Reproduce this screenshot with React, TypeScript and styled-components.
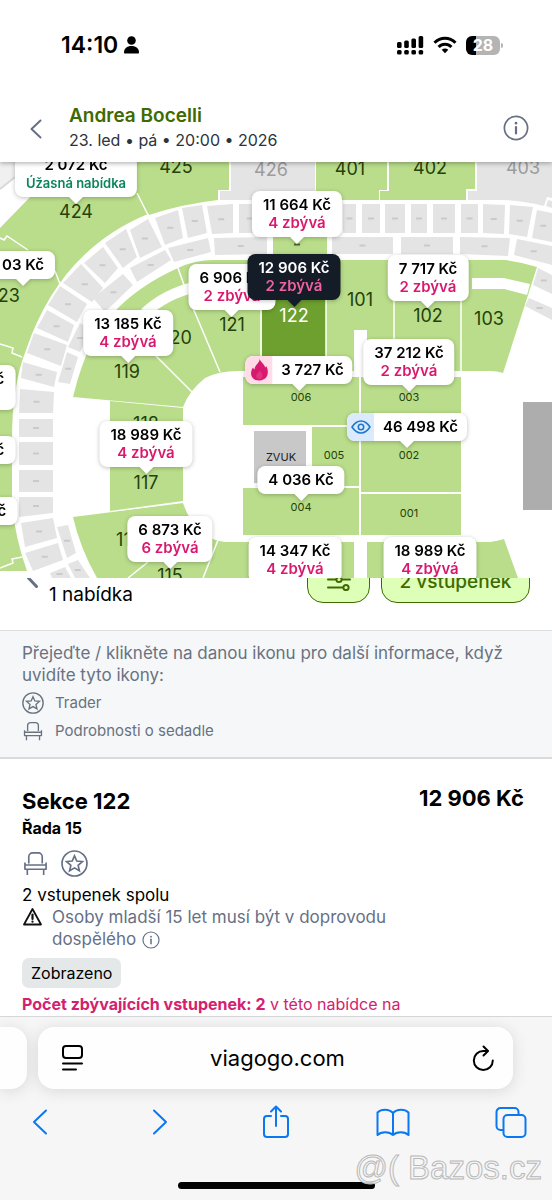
import React from "react";
import styled, { createGlobalStyle, css } from "styled-components";

const GlobalStyle = createGlobalStyle`
  *, *::before, *::after { box-sizing: border-box; }
  body { margin: 0; background: #fff; color: #000; font-family: Inter, "Liberation Sans", sans-serif; }
  button { font: inherit; color: inherit; background: none; border: 0; padding: 0; cursor: pointer; }
  h1, h2, p, ul { margin: 0; padding: 0; }
  svg { display: block; }
`;

const Page = styled.div`
  position: relative;
  display: flex;
  flex-direction: column;
  min-height: 100vh;
  overflow: hidden;
`;

/* ---------- status bar ---------- */
const StatusBar = styled.div`
  display: flex;
  align-items: center;
  justify-content: space-between;
  height: 90px;
  padding: 0 52px 0 61px;
`;
const StatusGroup = styled.div<{ $gap: number }>`
  display: flex;
  align-items: center;
  gap: ${(p) => p.$gap}px;
`;
const Clock = styled.span`
  font-size: 23px;
  line-height: 28px;
  font-weight: 600;
`;
const Battery = styled.span`
  position: relative;
  display: flex;
  align-items: center;
  justify-content: center;
  width: 34px;
  height: 19px;
  border-radius: 6px;
  background: linear-gradient(90deg, #000 28%, #b4b4b4 28%);
  color: #fff;
  font-size: 16px;
  font-weight: 700;
  &::after {
    content: "";
    position: absolute;
    right: -3px;
    top: 7px;
    width: 2px;
    height: 5px;
    border-radius: 0 2px 2px 0;
    background: #b4b4b4;
  }
`;

/* ---------- event header ---------- */
const Header = styled.header`
  position: relative;
  z-index: 3;
  display: flex;
  align-items: center;
  gap: 27px;
  height: 72px;
  padding: 4px 23px 0 30px;
  background: #fff;
  box-shadow: 0 1px 5px rgba(0, 0, 0, 0.35);
  clip-path: inset(0 0 -8px 0);
  color: #667085;
`;
const HeaderBack = styled.button`
  padding-top: 2px;
`;
const EventText = styled.div`
  flex: 1;
`;
const EventTitle = styled.h1`
  font-size: 19px;
  line-height: 24px;
  font-weight: 600;
  color: #3f6a00;
`;
const EventDate = styled.p`
  font-size: 16px;
  line-height: 24px;
  color: #2c333d;
`;

/* ---------- seat map ---------- */
const MapArea = styled.section`
  position: relative;
  z-index: 2;
  height: 416px;
  overflow: hidden;
  background: #fff;
`;
const SeatMap = styled.svg`
  width: 100%;
  height: 416px;
  font-family: Inter, sans-serif;
`;
const Pin = styled.button<{ $x: number; $y: number; $dark?: boolean; $flat?: boolean }>`
  position: absolute;
  left: calc(50% + ${(p) => p.$x - 276}px);
  top: ${(p) => p.$y - 162}px;
  transform: translateX(-50%);
  display: flex;
  border-radius: 8px;
  background: ${(p) => (p.$dark ? "#131c27" : "#fff")};
  color: ${(p) => (p.$dark ? "#fff" : "#000")};
  filter: drop-shadow(0 1px 2px rgba(0, 0, 0, 0.25));
  font-size: 15px;
  line-height: 18px;
  font-weight: 600;
  white-space: nowrap;
  ${(p) =>
    !p.$flat &&
    css`
      &::after {
        content: "";
        position: absolute;
        left: 50%;
        top: 100%;
        margin: -1px 0 0 -8px;
        border: 8px solid transparent;
        border-bottom: 0;
        border-top-color: ${p.$dark ? "#131c27" : "#fff"};
      }
    `}
`;
const PinBody = styled.span<{ $tight?: boolean; $tall?: boolean }>`
  display: block;
  min-height: ${(p) => (p.$tall ? 45 : 28)}px;
  padding: 5px ${(p) => (p.$tight ? 9 : 11)}px;
`;
const PinNote = styled.span<{ $tone: string; $small?: boolean }>`
  display: block;
  font-size: ${(p) => (p.$small ? 13 : 15)}px;
  color: ${(p) => p.$tone};
`;
const PinIcon = styled.span<{ $bg: string }>`
  display: flex;
  align-items: center;
  justify-content: center;
  width: 27px;
  border-radius: 8px 0 0 8px;
  background: ${(p) => p.$bg};
`;

/* ---------- offers bar ---------- */
const OffersBar = styled.div`
  position: relative;
  z-index: 1;
  display: flex;
  align-items: flex-start;
  gap: 11px;
  height: 52px;
  padding: 0 22px 0 27px;
`;
const OffersBack = styled.button`
  margin-top: -10px;
  color: #667085;
`;
const OffersCount = styled.p`
  flex: 1;
  padding-top: 5px;
  font-size: 19px;
  line-height: 24px;
`;
const Chip = styled.button<{ $width: number }>`
  display: flex;
  align-items: center;
  justify-content: center;
  width: ${(p) => p.$width}px;
  height: 42px;
  margin-top: -17px;
  border: 1px solid #3f6a00;
  border-radius: 16px;
  background: #deffb8;
  color: #3f6a00;
  font-size: 19px;
  line-height: 24px;
  font-weight: 500;
`;

/* ---------- legend ---------- */
const Legend = styled.section`
  padding: 11px 40px 12px 22px;
  border-top: 1px solid #dcdfe2;
  border-bottom: 2px solid #d8dadc;
  background: #f5f7f9;
  color: #697280;
  font-size: 17px;
  line-height: 22px;
`;
const LegendList = styled.ul`
  list-style: none;
  padding-top: 3px;
  font-size: 15px;
  line-height: 28px;
`;
const LegendItem = styled.li`
  display: flex;
  align-items: center;
  gap: 11px;
`;

/* ---------- listing ---------- */
const Listing = styled.article`
  display: flex;
  align-items: flex-start;
  justify-content: space-between;
  flex: 1;
  padding: 28px 28px 0 22px;
  font-size: 16px;
  line-height: 22px;
`;
const ListingMain = styled.div`
  flex: 1;
  max-width: 420px;
`;
const SectionName = styled.h2`
  font-size: 22px;
  line-height: 28px;
  font-weight: 700;
`;
const RowName = styled.p`
  font-size: 16px;
  line-height: 26px;
  font-weight: 700;
`;
const Price = styled.p`
  font-size: 22px;
  line-height: 22px;
  font-weight: 700;
`;
const Perks = styled.div`
  display: flex;
  align-items: center;
  gap: 12px;
  padding: 9px 0 7px;
  color: #667085;
`;
const Together = styled.p`
  font-size: 17px;
`;
const Warning = styled.div`
  display: flex;
  gap: 9px;
  font-size: 17px;
  color: #667085;
`;
const WarningIcon = styled.span`
  color: #111;
`;
const WarningText = styled.p`
  flex: 1;
  max-width: 345px;
`;
const InlineInfo = styled.button`
  display: inline-block;
  height: 18px;
  margin-left: 1px;
  vertical-align: -4px;
`;
const Seen = styled.span`
  display: inline-block;
  margin: 8px 0 5px;
  padding: 3px 9px;
  border-radius: 7px;
  background: #e4e8e9;
  line-height: 24px;
`;
const Remaining = styled.p`
  color: #d4216f;
  white-space: nowrap;
  b { font-weight: 700; }
`;

/* ---------- browser bar ---------- */
const BrowserBar = styled.footer`
  height: 184px;
  border-top: 1px solid #d5d7d8;
  background: #f6f6f6;
`;
const AddressRow = styled.div`
  display: flex;
  gap: 11px;
  padding: 10px 39px 0 0;
`;
const NextTab = styled.div`
  width: 27px;
  height: 62px;
  border-radius: 0 16px 16px 0;
  background: #fefefe;
  box-shadow: 0 2px 16px rgba(0, 0, 0, 0.12);
`;
const Address = styled.div`
  flex: 1;
  display: flex;
  align-items: center;
  justify-content: space-between;
  height: 62px;
  padding: 0 18px 0 24px;
  border-radius: 16px;
  background: #fefefe;
  box-shadow: 0 2px 16px rgba(0, 0, 0, 0.12);
  font-size: 22px;
`;
const Toolbar = styled.nav`
  display: flex;
  justify-content: space-between;
  align-items: center;
  padding: 13px 24px 0 23px;
  color: #0a78f0;
`;
const HomeBar = styled.div`
  width: 197px;
  height: 7px;
  margin: 40px auto 0;
  border-radius: 4px;
  background: #000;
`;
const Watermark = styled.span`
  position: absolute;
  right: 10px;
  bottom: 14px;
  font-family: "Liberation Sans", Arial, sans-serif;
  font-size: 33px;
  line-height: 36px;
  color: rgba(246, 246, 246, 0.85);
  -webkit-text-stroke: 1px #b9b9b9;
  white-space: pre;
`;

/* ---------- icons ---------- */
const stroke = { fill: "none", stroke: "currentColor", strokeLinecap: "round", strokeLinejoin: "round" } as const;

const InfoIcon = ({ size }: { size: number }) => (
  <svg width={size} height={size} viewBox="0 0 26 26" {...stroke} strokeWidth="1.7">
    <circle cx="13" cy="13" r="11.6" />
    <path d="M13 12v6.5" strokeWidth="2.2" />
    <path d="M13 8v.2" strokeWidth="2.6" />
  </svg>
);
const StarIcon = ({ size }: { size: number }) => (
  <svg width={size} height={size} viewBox="0 0 26 26" {...stroke} strokeWidth="1.6" strokeLinejoin="miter">
    <circle cx="13" cy="13" r="12" />
    <path d="M13 5.6l2.2 5 5.4.5-4.1 3.6 1.2 5.3-4.7-2.8-4.7 2.8 1.2-5.3-4.1-3.6 5.4-.5z" />
  </svg>
);
const SeatIcon = ({ width, height }: { width: number; height: number }) => (
  <svg width={width} height={height} viewBox="0 0 26 26" {...stroke} strokeWidth="1.7" strokeLinecap="butt">
    <path d="M6 13V6a4 4 0 0 1 4-4h6a4 4 0 0 1 4 4v7" />
    <path d="M2 12v7h22v-7M2 14.6h22M4.5 19v6M21.5 19v6" />
  </svg>
);
const Chevron = ({ w, h, width = 2 }: { w: number; h: number; width?: number }) => (
  <svg width={w} height={h} viewBox={`0 0 ${w} ${h}`} {...stroke} strokeWidth={width}>
    <path d={`M${w - 1.5} 1.5L1.5 ${h / 2}L${w - 1.5} ${h - 1.5}`} />
  </svg>
);

/* ---------- map data ---------- */
const green = "#b9dd8a";
const grey = "#e4e4e4";

const upperStands = [
  "M137 162H229V190H218V200Q182 204 149 215L137 193Z",
  "M316 162H387V190H379V200H316Z",
  "M389 162H475V189H466V200H380V191H389Z",
  "M34 193L60 162H137L148 214Q60 250 26 350Q12 385 12 440V500Q14 535 27 571H0V228Z",
];
const upperGrey = [
  "M231 162H315V200H220V191H231Z",
  "M477 162H552V198L547 197L544 206Q520 200 500 200H468V191H477Z",
  "M548 200L552 201V208L546 206Z",
];
const lowerStands = [
  "M73 397Q88 335 115 311Q140 285 178 268Q195 260 213 260H505Q522 262 537 267L503 373Q497 371 490 371H243Q220 370 205 378Q189 391 183 407Z",
  "M110 401L183 408V501L110 511Z",
  "M73 517L183 503Q188 517 194 524Q207 540 225 542H354V578H97Q80 548 73 517Z",
  "M367 542H490Q498 541 504 539L518 578H367Z",
  "M243 377H359V425H243Z",
  "M361 377H461V492H361Z",
  "M312 427H359V486H312Z",
  "M243 488H359V535H243Z",
  "M361 494H461V535H361Z",
  "M273 237H327V254H273Z",
];
const suites = [
  "182,208 202,205 207,233 188,238",
  "155,218 178,210 183,238 165,245",
  "130,230 148,219 162,247 140,258",
  "105,243 126,229 137,257 123,268",
  "84,263 103,247 118,268 105,283",
  "63,283 81,264 103,288 92,302",
  "48,305 60,286 87,304 77,322",
  "37,328 47,310 74,325 68,342",
  "27,353 34,333 67,345 61,366",
  "23,362 57,372 54,387 21,378",
  "20,389 54,392 53,413 19,413",
  "19,419 53,419 53,437 19,437",
  "19,442 53,442 53,465 19,465",
  "19,470 53,470 53,492 19,492",
  "19,497 53,497 53,513 19,517",
  "21,523 53,518 57,538 25,547",
  "25,553 58,543 63,560 33,571",
  "50,573 65,567 71,578 52,578",
  "214,238 267,237 267,254 215,255",
  "168,248 208,238 211,252 174,262",
  "130,268 165,250 171,260 137,282",
  "93,298 123,274 133,285 105,312",
  "68,347 80,323 92,330 80,352",
  "67,352 78,357 70,384 58,382",
  "57,527 68,525 76,553 67,558",
  "68,564 78,560 90,578 75,578",
  "207,206 233,204 233,233 212,234",
  "239,204 260,204 260,233 239,233",
  "343,204 356,204 356,233 343,233",
  "362,204 380,204 380,233 362,233",
  "385,204 405,204 405,233 385,233",
  "411,204 427,204 427,233 411,233",
  "433,204 455,204 455,233 433,233",
  "461,204 478,204 478,233 461,233",
  "483,204 505,205 504,234 483,233",
  "510,205 533,207 527,237 509,234",
  "537,210 552,213 552,242 532,238",
  "332,237 393,237 393,254 332,254",
  "401,237 453,237 453,254 401,254",
  "460,237 510,238 508,256 460,254",
  "517,239 552,246 552,265 514,255",
  "538,268 552,275 552,294 533,285",
  "529,298 552,308 552,320 525,306",
];
const center = (pts: string) => {
  const p = pts.split(" ").map((s) => s.split(",").map(Number));
  return [p.reduce((a, b) => a + b[0], 0) / p.length, p.reduce((a, b) => a + b[1], 0) / p.length];
};
const dividers =
  "M0 238L4 240L7 236L28 250M55 271L60 284M0 344L13 348L12 353L22 357M0 568L13 563L12 559L22 557" +
  "M137 193L148 215M261 259V371M326 259V371M394 259V371M461 259V377M178 268L184 285M193 308L220 372M155 355L192 392" +
  "M218 540L203 578M148 562L128 578";

const sections: [string, number, number, number?, string?][] = [
  ["425", 176, 173], ["426", 271, 176, 18, "#9c9c9c"], ["401", 350, 175], ["402", 430, 174], ["403", 523, 174, 18, "#9c9c9c"],
  ["424", 76, 218], ["423", 3, 302], ["121", 232, 331], ["120", 177, 344], ["119", 127, 378], ["118", 146, 430],
  ["117", 146, 489], ["116", 129, 546], ["115", 170, 582], ["101", 360, 306], ["102", 428, 322], ["103", 489, 325],
  ["122", 294, 322, 18, "#fff"], ["006", 301, 401, 11], ["003", 409, 401, 11], ["005", 334, 459, 11], ["002", 409, 459, 11],
  ["004", 301, 511, 11], ["001", 409, 517, 11], ["ZVUK", 281, 461, 11, "#222"],
];

type PinData = { x: number; y: number; price: string; note?: string; dark?: boolean; icon?: "fire" | "eye"; flat?: boolean; tall?: boolean };
const pins: PinData[] = [
  { x: 76, y: 151, price: "2 072 Kč", note: "Úžasná nabídka" },
  { x: 23, y: 251, price: "03 Kč" },
  { x: -5, y: 365, price: "Kč", flat: true, tall: true },
  { x: -5, y: 436, price: "Kč", flat: true },
  { x: -3, y: 497, price: "Kč", flat: true },
  { x: 297, y: 191, price: "11 664 Kč", note: "4 zbývá" },
  { x: 232, y: 264, price: "6 906 Kč", note: "2 zbývá" },
  { x: 294, y: 254, price: "12 906 Kč", note: "2 zbývá", dark: true },
  { x: 428, y: 255, price: "7 717 Kč", note: "2 zbývá" },
  { x: 128, y: 310, price: "13 185 Kč", note: "4 zbývá" },
  { x: 409, y: 339, price: "37 212 Kč", note: "2 zbývá" },
  { x: 299, y: 356, price: "3 727 Kč", icon: "fire" },
  { x: 407, y: 413, price: "46 498 Kč", icon: "eye" },
  { x: 146, y: 421, price: "18 989 Kč", note: "4 zbývá" },
  { x: 301, y: 466, price: "4 036 Kč" },
  { x: 170, y: 516, price: "6 873 Kč", note: "6 zbývá" },
  { x: 295, y: 537, price: "14 347 Kč", note: "4 zbývá" },
  { x: 430, y: 537, price: "18 989 Kč", note: "4 zbývá" },
];

function VenueMap() {
  return (
    <MapArea aria-label="Mapa haly">
      <SeatMap viewBox="0 162 552 416">
        <path d="M0 162H15V178L0 190Z" fill="#f0f0f0" />
        <path d="M0 189L15 177" stroke="#d9d9d9" strokeWidth="2" />
        {upperStands.map((d) => <path key={d} d={d} fill={green} />)}
        {upperGrey.map((d) => <path key={d} d={d} fill={grey} />)}
        {lowerStands.map((d) => <path key={d} d={d} fill={green} />)}
        {suites.map((p) => {
          const [cx, cy] = center(p);
          return (
            <g key={p}>
              <polygon points={p} fill={grey} />
              <path d={`M${cx - 3} ${cy}h6`} stroke="#cacaca" strokeWidth="2" />
            </g>
          );
        })}
        <path d="M294 244.500h6" stroke="#4b6a25" strokeWidth="2" />
        <path d="M145 313Q165 294 195 287Q225 283 262 283" fill="none" stroke="#fff" strokeWidth="11" />
        <path d="M472 278H504L530 284L527 295L504 289H472Z" fill="#fff" />
        <path d="M262 259H326V371H262Z" fill="#6ea02f" />
        <path d={dividers} fill="none" stroke="#fff" strokeWidth="1.5" />
        <path d="M354 330H367V377H354Z" fill="#fff" />
        <path d="M254 431H306V483H254Z" fill="#c8c8c8" />
        <path d="M523 402H552V510H523Z" fill="#adadad" />
        {sections.map(([name, x, y, size = 18, fill = "#24420a"]) => (
          <text key={name} x={x} y={y} fontSize={size} fill={fill} textAnchor="middle">{name}</text>
        ))}
      </SeatMap>
      {pins.map((p) => (
        <Pin key={`${p.x}-${p.y}`} type="button" $x={p.x} $y={p.y} $dark={p.dark} $flat={p.flat}>
          {p.icon === "fire" && (
            <PinIcon $bg="#ffdce8">
              <svg width="18" height="22" viewBox="0 0 18 22" fill="#d9186f">
                <path d="M9.500 0c.8 3.600 5 5 5.300 8.600.6-.4 1-.9 1.100-1.600 3 4.800 2.600 14-7 14.400C.4 21.400-1 13.400 2.800 8.400c.3 1 .8 1.700 1.600 2.200C4.200 6 9 4.600 9.500 0z" />
                <path d="M9 20c-3 0-4-2.600-2.500-4.700C7.500 14 9 13.200 9 11.600c2 1.600 3.600 3.400 3 5.800-.4 1.700-1.600 2.600-3 2.600z" fill="#e8508f" opacity=".5" />
              </svg>
            </PinIcon>
          )}
          {p.icon === "eye" && (
            <PinIcon $bg="#dbeafd">
              <svg width="20" height="14" viewBox="0 0 20 14" fill="none" stroke="#1d78d0" strokeWidth="1.6">
                <path d="M1 7Q5 1 10 1T19 7Q15 13 10 13T1 7Z" strokeLinejoin="round" />
                <circle cx="10" cy="7" r="2.700" />
              </svg>
            </PinIcon>
          )}
          <PinBody $tight={!!p.icon} $tall={p.tall}>
            {p.price}
            {p.note && (
              <PinNote
                $small={p.note.length > 10}
                $tone={p.dark ? "#f0619f" : p.note.length > 10 ? "#0b855c" : "#d9186f"}
              >
                {p.note}
              </PinNote>
            )}
          </PinBody>
        </Pin>
      ))}
    </MapArea>
  );
}

export default function App() {
  return (
    <>
      <GlobalStyle />
      <Page>
        <StatusBar>
          <StatusGroup $gap={5}>
            <Clock>14:10</Clock>
            <svg width="17" height="18" viewBox="0 0 17 18">
              <circle cx="8.500" cy="4.500" r="4.300" />
              <path d="M1 16.500C1 12.500 4 10 8.500 10s7.500 2.500 7.500 6.500c0 .6-.4 1-1 1H2c-.6 0-1-.4-1-1z" />
            </svg>
          </StatusGroup>
          <StatusGroup $gap={9}>
            <svg width="28" height="20" viewBox="0 0 28 20">
              {[7, 5.500, 3.500, 1].map((y, i) => (
                <g key={y}>
                  <rect x={1 + i * 7.200} y={y} width="4.600" height={13 - y} rx="1.500" />
                  <rect x={1 + i * 7.200} y="15" width="4.600" height="4.600" rx="1.500" />
                </g>
              ))}
            </svg>
            <svg width="24" height="18" viewBox="0 0 24 18" fill="none" stroke="#000" strokeWidth="3">
              <path d="M1.500 6.800C7.500.6 16.500.6 22.500 6.800" />
              <path d="M5.600 11C9.300 7.200 14.700 7.200 18.400 11" />
              <path d="M8.700 13.700C10.500 12 13.500 12 15.300 13.700L12 17.300Z" fill="#000" stroke="none" />
            </svg>
            <Battery>28</Battery>
          </StatusGroup>
        </StatusBar>

        <Header>
          <HeaderBack type="button" aria-label="Zpět"><Chevron w={12} h={20} /></HeaderBack>
          <EventText>
            <EventTitle>Andrea Bocelli</EventTitle>
            <EventDate>23. led • pá • 20:00 • 2026</EventDate>
          </EventText>
          <button type="button" aria-label="Informace"><InfoIcon size={26} /></button>
        </Header>

        <VenueMap />

        <OffersBar>
          <OffersBack type="button" aria-label="Zpět na nabídky"><Chevron w={11} h={20} width={3} /></OffersBack>
          <OffersCount>1 nabídka</OffersCount>
          <Chip type="button" $width={63} aria-label="Filtry">
            <svg width="24" height="18" viewBox="0 0 24 18" {...stroke} strokeWidth="2">
              <path d="M1 6.500h8M15 6.500h8M1 14.500h15" />
              <circle cx="12" cy="6.500" r="2.600" />
              <circle cx="19" cy="14.500" r="2.600" />
            </svg>
          </Chip>
          <Chip type="button" $width={149}>2 vstupenek</Chip>
        </OffersBar>

        <Legend>
          <p>Přejeďte / klikněte na danou ikonu pro další informace, když uvidíte tyto ikony:</p>
          <LegendList>
            <LegendItem><StarIcon size={22} />Trader</LegendItem>
            <LegendItem><SeatIcon width={22} height={20} />Podrobnosti o sedadle</LegendItem>
          </LegendList>
        </Legend>

        <Listing>
          <ListingMain>
            <SectionName>Sekce 122</SectionName>
            <RowName>Řada 15</RowName>
            <Perks>
              <SeatIcon width={27} height={25} />
              <StarIcon size={27} />
            </Perks>
            <Together>2 vstupenek spolu</Together>
            <Warning>
              <WarningIcon>
                <svg width="21" height="22" viewBox="0 0 21 22" {...stroke} strokeWidth="1.8">
                  <path d="M10.500 3L19 18.500H2Z" />
                  <path d="M10.500 8.500v4.500M10.500 15.500v.2" strokeWidth="2.200" />
                </svg>
              </WarningIcon>
              <WarningText>
                Osoby mladší 15 let musí být v doprovodu dospělého{" "}
                <InlineInfo type="button" aria-label="Více informací"><InfoIcon size={18} /></InlineInfo>
              </WarningText>
            </Warning>
            <Seen>Zobrazeno</Seen>
            <Remaining><b>Počet zbývajících vstupenek: 2</b> v této nabídce na</Remaining>
          </ListingMain>
          <Price>12 906 Kč</Price>
        </Listing>

        <BrowserBar>
          <AddressRow>
            <NextTab />
            <Address>
              <button type="button" aria-label="Nastavení stránky">
                <svg width="21" height="26" viewBox="0 0 21 26" {...stroke} strokeWidth="2">
                  <rect x="1" y="1" width="19" height="12" rx="3" />
                  <path d="M1 18.500h19M1 24.500h13" />
                </svg>
              </button>
              <span>viagogo.com</span>
              <button type="button" aria-label="Obnovit">
                <svg width="23" height="27" viewBox="0 0 23 27" {...stroke} strokeWidth="2">
                  <path d="M20.800 15.500A9.500 9.500 0 1 1 11.300 6H15.500" />
                  <path d="M11.500 1.500L16 6L11.500 10.500" />
                </svg>
              </button>
            </Address>
          </AddressRow>
          <Toolbar>
            <button type="button" aria-label="Předchozí">
              <svg width="34" height="40" viewBox="0 0 34 40" {...stroke} strokeWidth="2">
                <path d="M23 8.500L11 20L23 31.500" />
              </svg>
            </button>
            <button type="button" aria-label="Další">
              <svg width="34" height="40" viewBox="0 0 34 40" {...stroke} strokeWidth="2">
                <path d="M13 8.500L25 20L13 31.500" />
              </svg>
            </button>
            <button type="button" aria-label="Sdílet">
              <svg width="34" height="40" viewBox="0 0 34 40" {...stroke} strokeWidth="2">
                <path d="M12 14H8a3 3 0 0 0-3 3v15a3 3 0 0 0 3 3h18a3 3 0 0 0 3-3V17a3 3 0 0 0-3-3h-4M17 24V4.500M12 9.500L17 4.500L22 9.500" />
              </svg>
            </button>
            <button type="button" aria-label="Záložky">
              <svg width="34" height="40" viewBox="0 0 34 40" {...stroke} strokeWidth="2">
                <path d="M17 11C13 6.500 5 7 1.500 10.500V33C5 29.500 13 29 17 33C21 29 29 29.500 32.500 33V10.500C29 7 21 6.500 17 11ZM17 11V33" />
              </svg>
            </button>
            <button type="button" aria-label="Panely">
              <svg width="34" height="40" viewBox="0 0 34 40" {...stroke} strokeWidth="2">
                <path d="M9 28H6.500a4 4 0 0 1-4-4V10a4 4 0 0 1 4-4h14a4 4 0 0 1 4 4v3" />
                <rect x="9.500" y="13" width="22" height="22" rx="4" />
              </svg>
            </button>
          </Toolbar>
          <HomeBar />
        </BrowserBar>
        <Watermark>@( Bazos.cz</Watermark>
      </Page>
    </>
  );
}
